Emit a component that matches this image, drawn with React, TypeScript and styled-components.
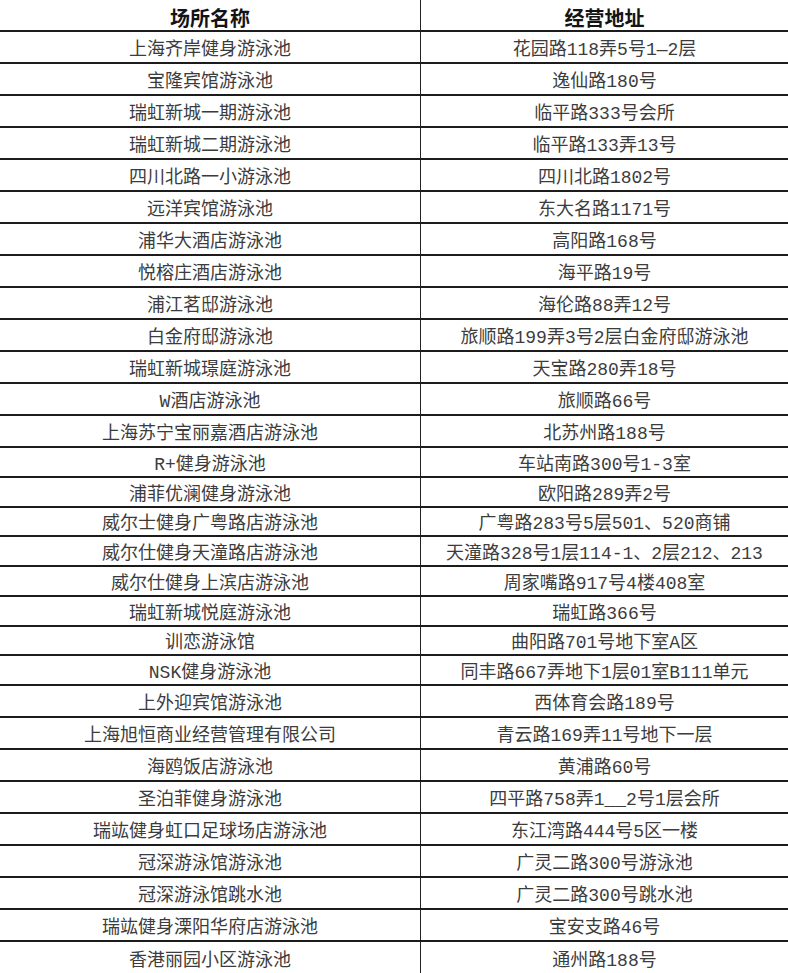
import styled, { createGlobalStyle } from "styled-components"

type Venue = {
  name: string
  address: string
}

const venues: Venue[] = [
  { name: "上海齐岸健身游泳池", address: "花园路118弄5号1—2层" },
  { name: "宝隆宾馆游泳池", address: "逸仙路180号" },
  { name: "瑞虹新城一期游泳池", address: "临平路333号会所" },
  { name: "瑞虹新城二期游泳池", address: "临平路133弄13号" },
  { name: "四川北路一小游泳池", address: "四川北路1802号" },
  { name: "远洋宾馆游泳池", address: "东大名路1171号" },
  { name: "浦华大酒店游泳池", address: "高阳路168号" },
  { name: "悦榕庄酒店游泳池", address: "海平路19号" },
  { name: "浦江茗邸游泳池", address: "海伦路88弄12号" },
  { name: "白金府邸游泳池", address: "旅顺路199弄3号2层白金府邸游泳池" },
  { name: "瑞虹新城璟庭游泳池", address: "天宝路280弄18号" },
  { name: "W酒店游泳池", address: "旅顺路66号" },
  { name: "上海苏宁宝丽嘉酒店游泳池", address: "北苏州路188号" },
  { name: "R+健身游泳池", address: "车站南路300号1-3室" },
  { name: "浦菲优澜健身游泳池", address: "欧阳路289弄2号" },
  { name: "威尔士健身广粤路店游泳池", address: "广粤路283号5层501、520商铺" },
  { name: "威尔仕健身天潼路店游泳池", address: "天潼路328号1层114-1、2层212、213" },
  { name: "威尔仕健身上滨店游泳池", address: "周家嘴路917号4楼408室" },
  { name: "瑞虹新城悦庭游泳池", address: "瑞虹路366号" },
  { name: "训恋游泳馆", address: "曲阳路701号地下室A区" },
  { name: "NSK健身游泳池", address: "同丰路667弄地下1层01室B111单元" },
  { name: "上外迎宾馆游泳池", address: "西体育会路189号" },
  { name: "上海旭恒商业经营管理有限公司", address: "青云路169弄11号地下一层" },
  { name: "海鸥饭店游泳池", address: "黄浦路60号" },
  { name: "圣泊菲健身游泳池", address: "四平路758弄1__2号1层会所" },
  { name: "瑞竑健身虹口足球场店游泳池", address: "东江湾路444号5区一楼" },
  { name: "冠深游泳馆游泳池", address: "广灵二路300号游泳池" },
  { name: "冠深游泳馆跳水池", address: "广灵二路300号跳水池" },
  { name: "瑞竑健身溧阳华府店游泳池", address: "宝安支路46号" },
  { name: "香港丽园小区游泳池", address: "通州路188号" },
]

// the scanned sheet has slightly uneven row heights
const rowHeight = (index: number) => {
  if (index < 13) return 32
  if (index < 21) return 29.75
  if (index < 29) return 32
  return 31
}

const GlobalStyle = createGlobalStyle`
  html, body {
    margin: 0;
    padding: 0;
    background: #ffffff;
  }
  body {
    font-family: "Liberation Mono", "Noto Sans CJK SC", sans-serif;
  }
`

const Sheet = styled.div`
  width: 788px;
  height: 973px;
  overflow: hidden;
  background: #ffffff;
`

const Row = styled.div<{ $height: number }>`
  display: grid;
  grid-template-columns: 421px 1fr;
  height: ${(p) => p.$height}px;
  box-sizing: border-box;
  border-bottom: 2px solid #1c1c1c;
`

const LastRow = styled(Row)`
  border-bottom: none;
`

const Cell = styled.div<{ $first?: boolean }>`
  display: flex;
  align-items: center;
  justify-content: center;
  border-right: ${(p) => (p.$first ? "1px solid #222222" : "none")};
  font-size: 18px;
  color: #3c3c3c;
  white-space: nowrap;
  letter-spacing: 0;
`

const HeaderCell = styled(Cell)`
  padding-top: 3px;
  font-family: "Noto Sans CJK SC", sans-serif;
  font-size: 20px;
  font-weight: 700;
  color: #141414;
`

export default function App() {
  return (
    <>
      <GlobalStyle />
      <Sheet>
        <Row $height={32}>
          <HeaderCell $first>场所名称</HeaderCell>
          <HeaderCell>经营地址</HeaderCell>
        </Row>
        {venues.map((venue, index) => {
          const RowKind = index === venues.length - 1 ? LastRow : Row
          return (
            <RowKind key={venue.name} $height={rowHeight(index)}>
              <Cell $first>{venue.name}</Cell>
              <Cell>{venue.address}</Cell>
            </RowKind>
          )
        })}
      </Sheet>
    </>
  )
}
